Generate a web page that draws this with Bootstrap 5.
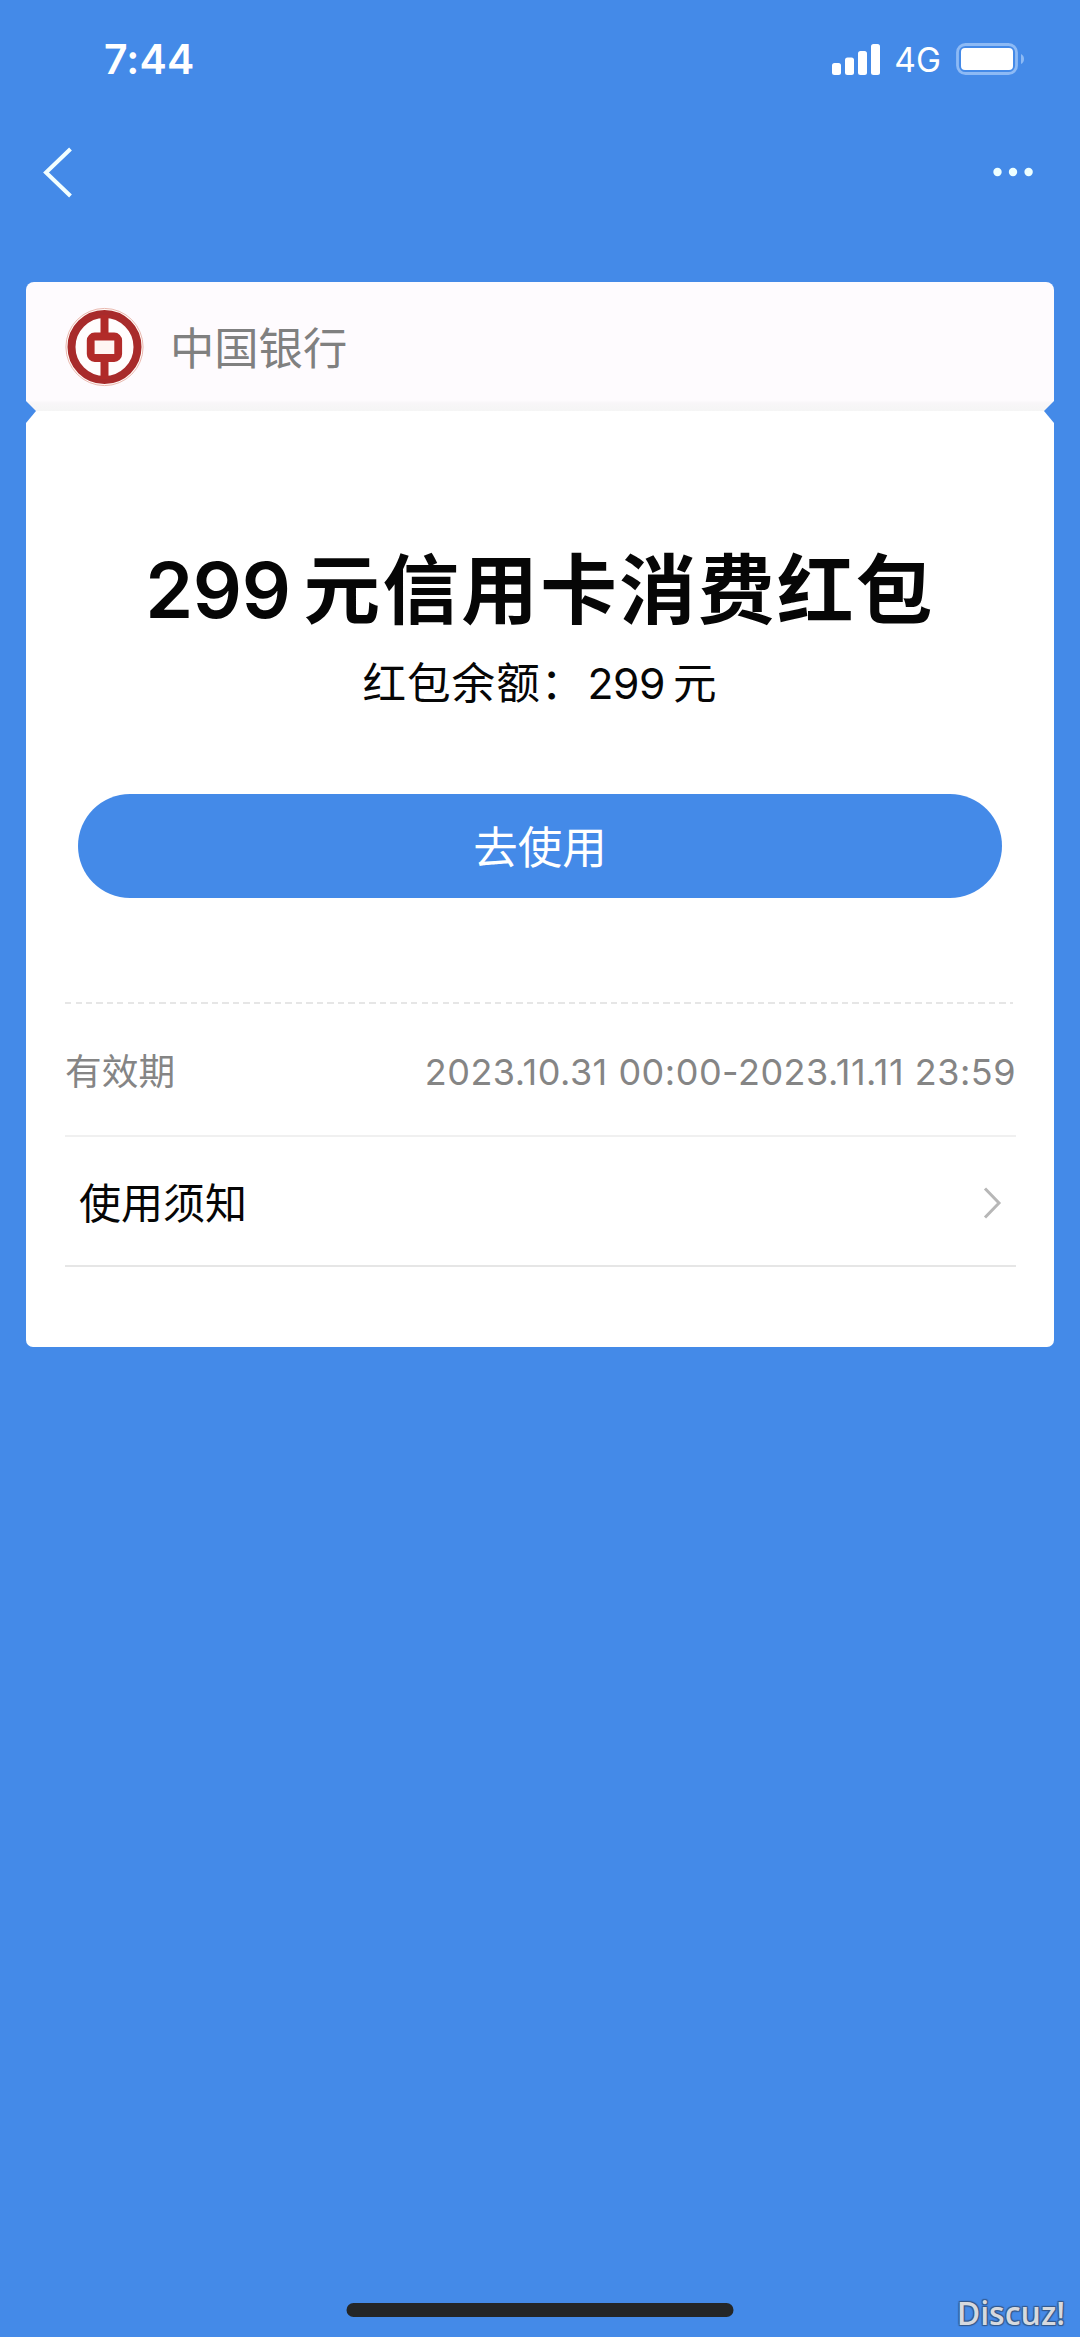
<!DOCTYPE html>
<html lang="zh-CN">
<head>
<meta charset="utf-8">
<meta name="viewport" content="width=device-width, initial-scale=1">
<title>中国银行红包</title>
<link href="https://cdn.jsdelivr.net/npm/bootstrap@5.3.0/dist/css/bootstrap.min.css" rel="stylesheet">
<style>
  body { background: #448ae8; font-family: Inter, "Noto Sans CJK SC", sans-serif; color: #060606; }
  .screen { width: 1080px; height: 2337px; }
  .status { height: 118px; padding: 0 54px 0 104px; }
  .clock { font-size: 41px; font-weight: 600; line-height: 118px; letter-spacing: .1px; }
  .network { font-size: 33.5px; line-height: 120px; margin: 2px 15px 0 14px; }
  .titlebar { height: 164px; padding: 0 45px 56px 40px; }
  .coupon { margin: 0 26px; height: 1065px; }
  .coupon-head { height: 129px; background: linear-gradient(#fefbfe 0 118px, #f8f6f8 121px, #f5f5f5 129px);
    border-radius: 8px 8px 0 0; padding: 0 38px; clip-path: polygon(0 0, 100% 0, 100% 119px, 1018px 129px, 10px 129px, 0 119px); }
  .coupon-body { height: 936px; border-radius: 0 0 7px 7px; padding: 0 38px;
    clip-path: polygon(10px 0, 1018px 0, 100% 12px, 100% 100%, 0 100%, 0 12px); }
  .bank { font-size: 44.3px; line-height: 60px; color: #808080; margin: 5px 0 0 26px; }
  .amount-title { font-size: 76.6px; height: 90px; line-height: 90px; font-weight: 700; letter-spacing: 2.3px; margin-top: 134px; }
  .amount-title .num { font-size: 77px; font-weight: 600; letter-spacing: -.4px; margin-right: 13px; }
  .balance { font-size: 43.6px; height: 60px; line-height: 60px; letter-spacing: 1px; margin-top: 19px; }
  .balance .num { font-size: 42.6px; letter-spacing: -.4px; margin: 0 8px 0 2px; }
  .use-btn { height: 104px; margin: 80px 14px 0; background: #448ae8; color: #fff; font-size: 44.5px; line-height: 60px; padding: 3px 0 0; }
  .dashes { height: 2px; width: 948px; margin: 104px 0 0 1px;
    background: repeating-linear-gradient(90deg, #e6e6e6 0 6px, transparent 6px 10.5px); }
  .validity { height: 133px; margin: 0 0 0 1px; padding-top: 5px; border-bottom: 2px solid #f0f0f0; color: #858585; font-size: 36.7px; }
  .validity .period { font-size: 36px; letter-spacing: .5px; }
  .notice { height: 130px; margin: 0 0 0 1px; border-bottom: 2px solid #e6e6e6; padding: 4px 14px 0 14px; font-size: 42px; }
  .homebar { width: 387px; height: 14px; bottom: 20px; background: #242627; }
  .stamp { right: 15px; bottom: 4px; font: 600 32px/40px "Open Sans", sans-serif; color: #d6d9de;
    text-shadow: 1px 1px 1px #34598c, -1px -1px 1px #34598c, 1px -1px 1px #34598c, -1px 1px 1px #34598c; }
</style>
</head>
<body>
<div class="screen position-relative overflow-hidden">
  <header class="text-white">
    <div class="status d-flex justify-content-between align-items-center">
      <div class="clock">7:44</div>
      <div class="d-flex align-items-center">
        <svg width="48" height="32" viewBox="0 0 48 32" fill="#fff">
          <rect x="0" y="20" width="9" height="12" rx="2.500"/><rect x="13" y="14.500" width="9" height="17.500" rx="2.500"/>
          <rect x="26" y="8" width="9" height="24" rx="2.500"/><rect x="39" y="1" width="9" height="31" rx="2.500"/>
        </svg>
        <span class="network">4G</span>
        <svg width="70" height="32" viewBox="0 0 70 32">
          <rect x="1.500" y="1.500" width="59" height="29" rx="8" fill="none" stroke="#8dbaf5" stroke-width="2.800"/>
          <rect x="5" y="5" width="52" height="22" rx="4" fill="#fff"/>
          <path d="M65 11q3 1.500 3 5t-3 5z" fill="#8dbaf5"/>
        </svg>
      </div>
    </div>
    <div class="titlebar d-flex justify-content-between align-items-center">
      <svg width="36" height="52" viewBox="0 0 36 52" fill="none" stroke="#f2ffff" stroke-width="4"><path d="M30.500 3L6 26.500 30.500 50"/></svg>
      <svg width="44" height="12" viewBox="0 0 44 12" fill="#edffff"><circle cx="6.500" cy="6" r="4.200"/><circle cx="22" cy="6" r="4.200"/><circle cx="37.600" cy="6" r="4.200"/></svg>
    </div>
  </header>

  <main class="coupon">
    <div class="coupon-head d-flex align-items-center">
      <svg width="80" height="80" viewBox="0 0 80 80">
        <circle cx="40.500" cy="40" r="38.600" fill="#fff8f5" stroke="#e9b9b0" stroke-width="1"/>
        <circle cx="40.500" cy="40" r="33" fill="#fffdfd" stroke="#a82b2b" stroke-width="8"/>
        <path d="M40.500 8v21M40.500 51v21" stroke="#b02a28" stroke-width="8"/>
        <rect x="26.700" y="29.500" width="27.500" height="21.500" rx="4" fill="#fff6f3" stroke="#b22b29" stroke-width="7.800"/>
      </svg>
      <span class="bank">中国银行</span>
    </div>
    <div class="coupon-body bg-white d-flex flex-column">
      <h1 class="amount-title text-center text-nowrap mb-0"><span class="num">299</span>元信用卡消费红包</h1>
      <p class="balance text-center text-nowrap mb-0">红包余额：<span class="num">299</span>元</p>
      <button type="button" class="use-btn btn rounded-pill border-0">去使用</button>
      <div class="dashes"></div>
      <div class="validity d-flex justify-content-between align-items-center">
        <span>有效期</span><span class="period">2023.10.31 00:00-2023.11.11 23:59</span>
      </div>
      <div class="notice d-flex justify-content-between align-items-center">
        <span>使用须知</span>
        <svg width="20" height="34" viewBox="0 0 20 34" fill="none" stroke="#b7b7b7" stroke-width="3"><path d="M3 2.500L17 17 3 31.500"/></svg>
      </div>
    </div>
  </main>

  <div class="homebar rounded-pill position-absolute start-50 translate-middle-x"></div>
  <div class="stamp position-absolute">Discuz!</div>
</div>
<script src="https://cdn.jsdelivr.net/npm/bootstrap@5.3.0/dist/js/bootstrap.bundle.min.js"></script>
</body>
</html>
